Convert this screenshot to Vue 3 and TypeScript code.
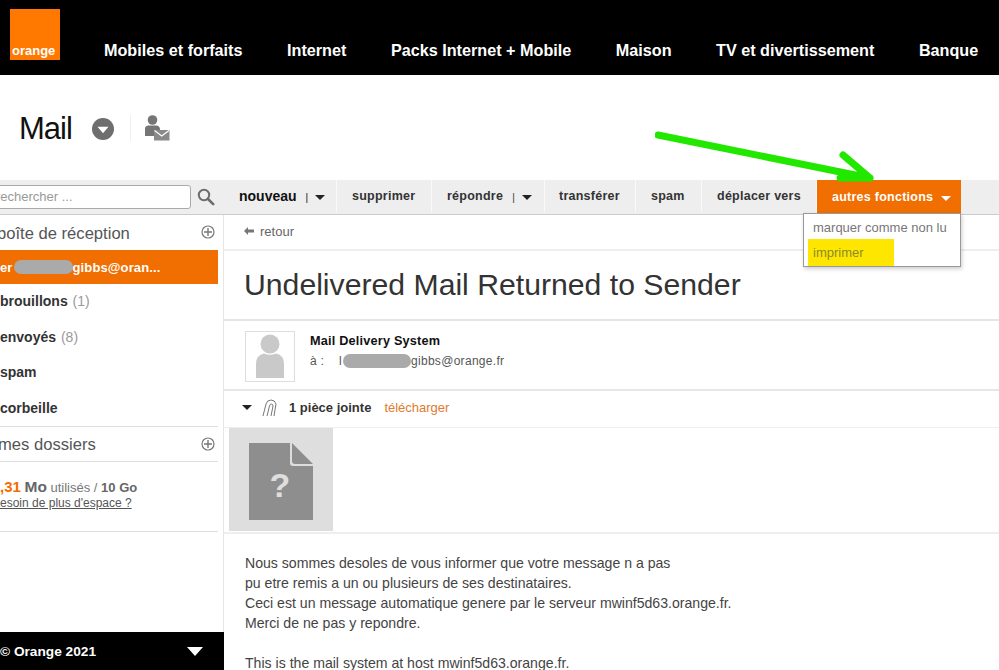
<script setup lang="ts">
const navItems = ['Mobiles et forfaits', 'Internet', 'Packs Internet + Mobile', 'Maison', 'TV et divertissement', 'Banque']

const folders = [
  { name: 'brouillons', count: '(1)' },
  { name: 'envoyés', count: '(8)' },
  { name: 'spam', count: '' },
  { name: 'corbeille', count: '' },
]

const messageLines = [
  'Nous sommes desoles de vous informer que votre message n a pas',
  'pu etre remis a un ou plusieurs de ses destinataires.',
  'Ceci est un message automatique genere par le serveur mwinf5d63.orange.fr.',
  'Merci de ne pas y repondre.',
  '',
  'This is the mail system at host mwinf5d63.orange.fr.',
]
</script>

<template>
  <div class="page">
    <header class="top">
      <div class="logo"><span>orange</span></div>
      <nav class="nav">
        <a v-for="item in navItems" :key="item">{{ item }}</a>
      </nav>
    </header>

    <div class="title-row">
      <h1>Mail</h1>
      <svg class="round-arrow" width="22" height="22" viewBox="0 0 24 24">
        <circle cx="12" cy="12" r="12" fill="#6e6e6e" />
        <path d="M6 9.500h12l-6 7z" fill="#fff" />
      </svg>
      <span class="title-sep"></span>
      <svg class="user-mail" width="25" height="26" viewBox="0 0 25 26">
        <circle cx="7.500" cy="5" r="4.800" fill="#757575" />
        <path d="M0 21V14q0-3.500 3.500-3.500h8q3 0 3.500 3.500v1H9v6z" fill="#757575" />
        <rect x="9" y="15" width="15.500" height="10.500" fill="#8a8a8a" />
        <path d="M9.500 15.500l7.250 5.500 7.250-5.500" fill="none" stroke="#fff" stroke-width="1.200" />
      </svg>
    </div>

    <div class="toolbar">
      <div class="search">
        <div class="search-box">rechercher ...</div>
        <svg width="18" height="18" viewBox="0 0 18 18">
          <circle cx="7" cy="7" r="5.200" fill="none" stroke="#6d6d6d" stroke-width="2" />
          <path d="M11 11l5.200 5.200" stroke="#6d6d6d" stroke-width="2.600" stroke-linecap="round" />
        </svg>
      </div>
      <button class="tool tool-new">nouveau<i class="bar">|</i><i class="caret"></i></button>
      <button class="tool tool-del">supprimer</button>
      <button class="tool tool-reply">répondre<i class="bar">|</i><i class="caret"></i></button>
      <button class="tool tool-fwd">transférer</button>
      <button class="tool tool-spam">spam</button>
      <button class="tool tool-move">déplacer vers</button>
      <button class="tool tool-more">autres fonctions<i class="caret"></i></button>
    </div>

    <div class="content">
      <aside class="side">
        <div class="side-head inbox-head">
          <span>boîte de réception</span>
          <svg class="plus" width="14" height="14" viewBox="0 0 14 14">
            <circle cx="7" cy="7" r="6" fill="none" stroke="#777" stroke-width="1.200" />
            <path d="M7 3v8M3 7h8" stroke="#777" stroke-width="1.400" />
          </svg>
        </div>
        <div class="account">
          <span>er</span><span class="blur blur-side"></span><span>gibbs@oran...</span>
        </div>
        <div v-for="folder in folders" :key="folder.name" class="folder">
          {{ folder.name }} <span v-if="folder.count" class="count">{{ folder.count }}</span>
        </div>
        <div class="side-head dossiers-head">
          <span>mes dossiers</span>
          <svg class="plus" width="14" height="14" viewBox="0 0 14 14">
            <circle cx="7" cy="7" r="6" fill="none" stroke="#777" stroke-width="1.200" />
            <path d="M7 3v8M3 7h8" stroke="#777" stroke-width="1.400" />
          </svg>
        </div>
        <div class="quota">
          <div class="quota-line"><b class="used">,31</b> <b class="mo">Mo</b> utilisés / <b>10 Go</b></div>
          <a class="more-space">esoin de plus d'espace ?</a>
        </div>
        <div class="side-foot">
          <span>© Orange 2021</span>
          <i class="foot-caret"></i>
        </div>
      </aside>

      <main class="mail">
        <div class="back">
          <svg width="10" height="8" viewBox="0 0 10 8">
            <path d="M4 0v2.500h6v3H4V8L0 4z" fill="#777" />
          </svg>
          retour
        </div>
        <h2>Undelivered Mail Returned to Sender</h2>
        <div class="sender">
          <div class="avatar">
            <svg width="30" height="44" viewBox="0 0 30 44">
              <circle cx="15" cy="10" r="9.500" fill="#c9c9c9" />
              <path d="M1 44V30q0-9 8-10.500 6 2.500 12 0 8 1.500 8 10.500v14z" fill="#c9c9c9" />
            </svg>
          </div>
          <div class="sender-info">
            <div class="sender-name">Mail Delivery System</div>
            <div class="sender-to">
              <span class="to-label">à :</span>
              <span>l</span><span class="blur blur-to"></span><span>gibbs@orange.fr</span>
            </div>
          </div>
        </div>
        <div class="attach">
          <i class="attach-caret"></i>
          <svg width="16" height="18" viewBox="0 0 16 18">
            <path d="M1 17L4 5Q5 1 9 1t5 4L12 17" fill="none" stroke="#777" stroke-width="1" />
            <path d="M5 17L7.500 7Q8 5 9.500 5t1.500 2L9 17" fill="none" stroke="#777" stroke-width="1" />
          </svg>
          <b>1 pièce jointe</b>
          <a>télécharger</a>
        </div>
        <div class="thumb-row">
          <div class="thumb">
            <svg width="64" height="77" viewBox="0 0 64 77">
              <path d="M0 0h41v20q0 3 3 3h20v54H0z" fill="#8e8e8e" />
              <path d="M43 0l21 21H46q-3 0-3-3z" fill="#8e8e8e" />
              <text x="31" y="54" text-anchor="middle" class="thumb-q">?</text>
            </svg>
          </div>
        </div>
        <div class="body-text">
          <p v-for="(line, i) in messageLines" :key="i">{{ line }}</p>
        </div>
      </main>
    </div>

    <div class="menu">
      <div class="menu-item">marquer comme non lu</div>
      <div class="menu-item menu-print"><mark>imprimer</mark></div>
    </div>

    <svg class="arrow" width="230" height="60" viewBox="0 0 230 60">
      <path d="M3 5L215 48M188 25L215 48L185 48" fill="none" stroke="#22e800" stroke-width="7" stroke-linecap="round" stroke-linejoin="round" />
    </svg>
  </div>
</template>

<style>
html, body {
  margin: 0;
  background: #fff;
}
</style>

<style scoped>
.page {
  position: relative;
  width: 999px;
  height: 670px;
  overflow: hidden;
  background: #fff;
  font-family: "Liberation Sans", Arial, sans-serif;
  color: #222;
}

.top {
  display: flex;
  height: 75px;
  background: #000;
  padding-left: 10px;
  box-sizing: border-box;
}

.logo {
  width: 50px;
  height: 51px;
  margin-top: 9px;
  background: #ff7900;
  display: flex;
  align-items: flex-end;
  padding: 0 0 2px 2px;
  box-sizing: border-box;
}

.logo span {
  color: #fff;
  font-size: 13px;
  font-weight: bold;
}

.nav {
  display: flex;
  align-items: center;
  height: 53px;
  margin-top: 24px;
  margin-left: 44px;
  gap: 44.500px;
  white-space: nowrap;
  font-size: 16.200px;
  font-weight: bold;
  color: #fff;
}

.title-row {
  display: flex;
  align-items: center;
  height: 105px;
  padding-left: 19px;
  box-sizing: border-box;
}

h1 {
  margin: 2px 20px 0 0;
  font-size: 31px;
  font-weight: normal;
  color: #111;
  letter-spacing: -1px;
}

.round-arrow {
  margin-top: 2px;
}

.title-sep {
  width: 1px;
  height: 26px;
  margin: 0 14px 0 16px;
  background: #eee;
}

.user-mail {
  margin-top: 1px;
}

.toolbar {
  display: flex;
  height: 35px;
  background: #eee;
  border-bottom: 1px solid #ccc;
  box-sizing: border-box;
}

.search {
  display: flex;
  align-items: center;
  width: 225px;
  flex: none;
}

.search-box {
  width: 201px;
  height: 24px;
  margin-left: -10px;
  padding-left: 5px;
  box-sizing: border-box;
  background: #fff;
  border: 1px solid #aaa;
  border-radius: 3px;
  font-size: 13px;
  line-height: 22px;
  color: #999;
  white-space: nowrap;
}

.search svg {
  margin-left: 6px;
}

.tool {
  display: flex;
  align-items: center;
  height: 32px;
  padding: 0 0 0 15px;
  margin: 0 1px 0 0;
  border: 0;
  background: #eee;
  box-shadow: 1px 0 0 #fafafa, 0 2px 0 #eee;
  font-family: inherit;
  font-size: 12.500px;
  font-weight: bold;
  letter-spacing: 0.250px;
  color: #333;
  white-space: nowrap;
}

.tool-new { width: 111px; padding-left: 14px; font-size: 14px; letter-spacing: 0; color: #111; }
.tool-del { width: 94px; }
.tool-reply { width: 112px; }
.tool-fwd { width: 90px; padding-left: 14px; }
.tool-spam { width: 65px; }
.tool-move { width: 114px; }
.tool-more { width: 144px; height: 34px; background: #f16e00; color: #fff; box-shadow: none; }

.bar {
  margin: 2px 7px 0 9px;
  font-style: normal;
  font-weight: normal;
  font-size: 10px;
}

.caret {
  width: 0;
  height: 0;
  margin-top: 3px;
  border-left: 5px solid transparent;
  border-right: 5px solid transparent;
  border-top: 5px solid #222;
}

.tool-more .caret {
  margin-left: 8px;
  border-top-color: #fff;
}

.content {
  display: flex;
  height: 455px;
}

.side {
  position: relative;
  flex: none;
  width: 224px;
  height: 455px;
  border-right: 1px solid #e6e6e6;
  padding-right: 5px;
  box-sizing: border-box;
}

.side-head {
  display: flex;
  align-items: center;
  justify-content: space-between;
  height: 35px;
  font-size: 16.600px;
  color: #555;
  box-sizing: border-box;
  padding-right: 3px;
}

.inbox-head span {
  margin: 2px 0 0 -3px;
}

.dossiers-head {
  height: 36px;
  border-top: 1px solid #ddd;
  border-bottom: 1px solid #ddd;
  padding-top: 2px;
}

.dossiers-head span {
  margin-left: -2px;
}

.plus {
  margin-top: -2px;
}

.account {
  display: flex;
  align-items: center;
  height: 34px;
  background: #f16e00;
  color: #fff;
  font-size: 13px;
  letter-spacing: 0.120px;
  font-weight: bold;
  white-space: nowrap;
}

.blur {
  display: inline-block;
  border-radius: 7px;
  background: #aaa;
}

.blur-side {
  width: 59px;
  height: 14px;
  margin: 0 0 0 1px;
}

.folder {
  height: 35.500px;
  line-height: 35px;
  font-size: 14px;
  font-weight: bold;
  color: #333;
  white-space: nowrap;
}

.count {
  margin-left: 1px;
  font-weight: normal;
  color: #999;
}

.quota {
  height: 70px;
  padding-top: 16px;
  box-sizing: border-box;
  border-bottom: 1px solid #ddd;
  font-size: 13px;
  color: #777;
}

.quota-line {
  height: 18px;
  line-height: 18px;
  white-space: nowrap;
}

.quota-line b {
  color: #666;
}

.quota-line .used {
  color: #f16e00;
  font-size: 15px;
}

.quota-line .mo {
  font-size: 15.500px;
}

.more-space {
  display: block;
  font-size: 12px;
  color: #555;
  text-decoration: underline;
}

.side-foot {
  position: absolute;
  left: 0;
  bottom: 0;
  width: 224px;
  height: 38px;
  background: #000;
  color: #fff;
  display: flex;
  align-items: center;
  justify-content: space-between;
  padding: 0 21px 0 0;
  box-sizing: border-box;
  font-size: 13.700px;
  font-weight: bold;
}

.foot-caret {
  border-left: 8px solid transparent;
  border-right: 8px solid transparent;
  border-top: 9px solid #fff;
}

.mail {
  flex: 1;
  min-width: 0;
}

.back {
  display: flex;
  align-items: center;
  gap: 6px;
  height: 36px;
  padding: 0 0 2px 20px;
  box-sizing: border-box;
  border-bottom: 2px solid #eee;
  font-size: 13px;
  color: #666;
}

h2 {
  margin: 0;
  height: 70px;
  padding-left: 20px;
  box-sizing: border-box;
  border-bottom: 2px solid #e6e6e6;
  font-size: 30.200px;
  line-height: 68px;
  font-weight: normal;
  color: #333;
  white-space: nowrap;
}

.sender {
  display: flex;
  gap: 15px;
  height: 70px;
  padding: 10px 0 0 21px;
  box-sizing: border-box;
  border-bottom: 2px solid #e6e6e6;
}

.avatar {
  width: 50px;
  height: 51px;
  box-sizing: border-box;
  border: 1px solid #ddd;
  display: flex;
  align-items: flex-end;
  justify-content: center;
  padding-bottom: 3px;
}

.sender-info {
  padding-top: 3px;
}

.sender-name {
  font-size: 12.700px;
  font-weight: bold;
  color: #111;
  letter-spacing: 0.200px;
  margin-bottom: 6px;
}

.sender-to {
  display: flex;
  align-items: center;
  font-size: 12px;
  letter-spacing: 0.300px;
  color: #555;
}

.to-label {
  width: 29px;
}

.blur-to {
  width: 68px;
  height: 14px;
  margin: 0 0 0 1px;
}

.attach {
  display: flex;
  align-items: center;
  height: 37px;
  padding: 0 0 3px 18px;
  box-sizing: border-box;
  border-bottom: 1px solid #eee;
  font-size: 13px;
  white-space: nowrap;
}

.attach-caret {
  border-left: 5px solid transparent;
  border-right: 5px solid transparent;
  border-top: 5px solid #222;
  margin-right: 10px;
}

.attach b {
  margin-left: 11px;
  color: #333;
}

.attach a {
  margin-left: 13px;
  color: #e07b30;
}

.thumb-row {
  height: 106px;
  padding-left: 5px;
  border-bottom: 2px solid #eee;
  box-sizing: border-box;
}

.thumb {
  width: 104px;
  height: 103px;
  padding-top: 3px;
  box-sizing: border-box;
  background: #dedede;
  display: flex;
  align-items: center;
  justify-content: center;
}

.thumb-q {
  font-family: "Liberation Sans", Arial, sans-serif;
  font-size: 34px;
  font-weight: bold;
  fill: #dedede;
}

.body-text {
  padding: 19px 0 0 21px;
  font-size: 14.100px;
  line-height: 20px;
  color: #444;
  white-space: nowrap;
}

.body-text p {
  margin: 0;
  min-height: 20px;
}

.menu {
  position: absolute;
  left: 803px;
  top: 213px;
  width: 158px;
  height: 54px;
  box-sizing: border-box;
  background: #fff;
  border: 1px solid #999;
  box-shadow: 1px 2px 4px rgba(0, 0, 0, 0.2);
  padding: 3px 4px 0;
  font-size: 13px;
  color: #777;
}

.menu-item {
  height: 22px;
  padding-left: 5px;
  line-height: 21px;
  white-space: nowrap;
}

.menu-print {
  height: 28px;
  padding-left: 0;
}

.menu-print mark {
  display: block;
  width: 86px;
  height: 27px;
  padding-left: 5px;
  box-sizing: border-box;
  line-height: 28px;
  background: #ffe600;
  color: #8a8a2a;
}

.arrow {
  position: absolute;
  left: 655px;
  top: 130px;
}
</style>
